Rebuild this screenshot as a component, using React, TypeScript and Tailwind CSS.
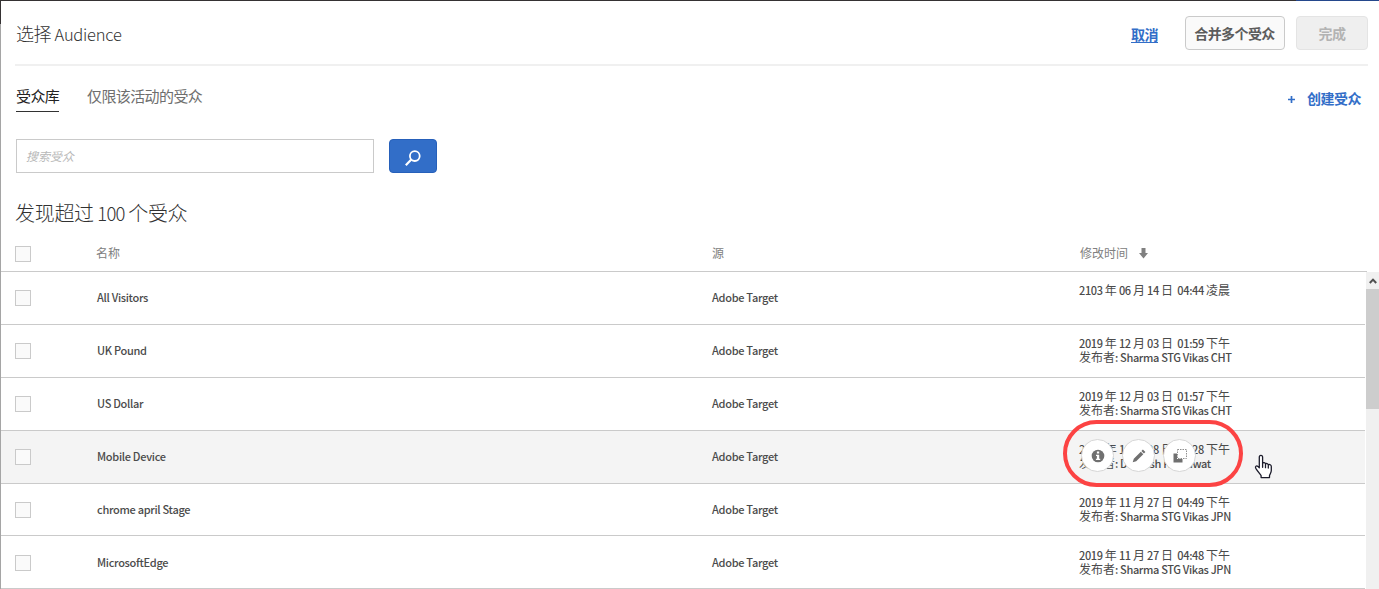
import React from 'react';

type Row = {
  name: string;
  date: string;
  by?: string;
  height: string;
  pad: string;
  active?: boolean;
};

const rows: Row[] = [
  { name: 'All Visitors', date: '2103 年 06 月 14 日\u00a0 04:44 凌晨', height: 'h-[53px]', pad: 'pt-[17px]' },
  { name: 'UK Pound', date: '2019 年 12 月 03 日\u00a0 01:59 下午', by: 'Sharma STG Vikas CHT', height: 'h-[53px]', pad: 'pt-[17px]' },
  { name: 'US Dollar', date: '2019 年 12 月 03 日\u00a0 01:57 下午', by: 'Sharma STG Vikas CHT', height: 'h-[53px]', pad: 'pt-[17px]' },
  { name: 'Mobile Device', date: '2019 年 11 月 28 日\u00a0 04:28 下午', by: 'Durgesh Kumawat', height: 'h-[53px]', pad: 'pt-[17px]', active: true },
  { name: 'chrome april Stage', date: '2019 年 11 月 27 日\u00a0 04:49 下午', by: 'Sharma STG Vikas JPN', height: 'h-[52px]', pad: 'pt-[17px]' },
  { name: 'MicrosoftEdge', date: '2019 年 11 月 27 日\u00a0 04:48 下午', by: 'Sharma STG Vikas JPN', height: 'h-[53px]', pad: 'pt-[18px]' },
];

/* Chinese characters are set larger and lighter than the Latin text beside them. */
function Mixed({ text }: { text: string }) {
  return (
    <>
      {text.split(/([\u4e00-\u9fff]+)/).map((part, i) =>
        i % 2 ? <span key={i} className="text-[12px] leading-[14px] font-normal tracking-normal">{part}</span> : part,
      )}
    </>
  );
}

function Checkbox() {
  return <span className="block size-4 shrink-0 border border-[#cacaca] bg-[#fafafa]" />;
}

function ActionButton({ label, children }: { label: string; children: React.ReactNode }) {
  return (
    <button aria-label={label} className="flex size-[33px] items-center justify-center rounded-full border border-[#d6d6d6] bg-white">
      {children}
    </button>
  );
}

function RowActions() {
  return (
    <div className="absolute left-[1062px] top-[-11px] flex h-[67px] w-[180px] items-center gap-[8px] rounded-full border-4 border-[#fc4343] pl-[14px] pt-[4px]">
      <ActionButton label="info">
        <svg width="14" height="14" viewBox="0 0 14 14">
          <circle cx="7" cy="7" r="6.3" fill="#707070" />
          <path d="M5.9 2.6h2.3v2H5.900zM5 5.700h3.200v4h1v1.300H4.900V9.700h1V7H5z" fill="#fff" />
        </svg>
      </ActionButton>
      <ActionButton label="edit">
        <svg width="14" height="14" viewBox="0 0 14 14" fill="#707070">
          <path d="M10.900.6 13.400 3.100 11.900 4.600 9.400 2.100zM8.800 2.700 11.300 5.200 4.200 12.200.7 13.300 1.800 9.700z" />
        </svg>
      </ActionButton>
      <ActionButton label="copy">
        <svg width="14" height="14" viewBox="0 0 14 14">
          <path d="M.5 4.500h3.500v5.500h5.500v3.500h-9z" fill="#707070" />
          <rect x="4.500" y=".5" width="9" height="9" fill="none" stroke="#909090" strokeDasharray="1.500 1" />
        </svg>
      </ActionButton>
    </div>
  );
}

function Pointer() {
  return (
    <svg className="absolute left-[1253px] top-[23px]" width="19" height="25" viewBox="0 0 19 25">
      <path
        d="M5.300 3.300c0-2.600 3.300-2.600 3.300 0v6c.6-1 2.600-.8 2.900.6.8-.8 2.600-.4 2.800.9 1.300-.7 3 .1 3 1.700v4.100c0 2-1.200 3.100-1.800 5v2H7.100v-2c-1.600-2.200-3.600-4.600-5.300-7.300-1.100-2 .8-3.100 2.100-1.900l1.400 1.400zM8.600 9.300v4M11.500 10.500v3.200M14.300 11.500v2.500"
        fill="#fff" stroke="#1c1c2b" strokeWidth="1.300" strokeLinejoin="round" strokeLinecap="round"
      />
    </svg>
  );
}

export default function App() {
  return (
    <div className="flex h-[589px] w-[1379px] flex-col overflow-hidden bg-white font-['Noto_Sans_CJK_SC',sans-serif] text-[#4b4b4b]">
      <div className="flex h-px shrink-0 bg-[#353233]">
        <span className="ml-[1296px] w-[83px] bg-[#24478c]" />
      </div>
      <div className="flex min-h-0 grow">
        <div className="w-px shrink-0 bg-[#a5a5a5]">
          <div className="h-[23px] bg-[#353233]" />
        </div>
        <main className="flex min-w-0 grow flex-col">
          <header className="ml-[14px] mr-[11px] flex h-[65px] shrink-0 items-center border-b-2 border-[#f0f0f0]">
            <h1 className="grow whitespace-nowrap pl-px pt-[2px] text-[18px] leading-6 font-light tracking-[-0.4px] text-[#323232]">
              选择<span className="text-[16.5px] tracking-[-0.25px]"> Audience</span>
            </h1>
            <a className="mr-[27px] pt-[2px] text-[14px] leading-5 font-bold tracking-[-0.5px] text-[#326ec8] underline underline-offset-2">取消</a>
            <button className="mr-[11px] h-[34px] w-[100px] rounded-[4px] border border-[#cacaca] bg-[#fafafa] pr-px pt-px text-[14px] font-bold tracking-[-0.6px] text-[#5c5c5c]">合并多个受众</button>
            <button className="h-[34px] w-[72px] rounded-[4px] border border-[#e4e4e4] bg-[#efefef] pt-px text-[14px] font-bold tracking-[-0.6px] text-[#b3b3b3]">完成</button>
          </header>

          <nav className="ml-[15px] mr-[18px] flex h-[46px] shrink-0 items-end text-[15px] leading-[22px] tracking-[-0.6px]">
            <a className="mr-[28px] h-[27px] w-[43px] whitespace-nowrap border-b border-[#323232] text-[#222]">受众库</a>
            <a className="h-[27px] grow text-[#6e6e6e]">仅限该活动的受众</a>
            <a className="flex h-[25px] items-center gap-[12px] text-[14px] leading-5 font-bold tracking-[-0.5px] text-[#326ec8]">
              <svg width="7" height="7" viewBox="0 0 7 7"><path d="M3.500 0v7M0 3.500h7" stroke="#326ec8" strokeWidth="1.700" /></svg>
              <span className="pb-[3px]">创建受众</span>
            </a>
          </nav>

          <div className="ml-[15px] mt-[27px] flex h-[34px] shrink-0">
            <div className="flex w-[358px] items-center border border-[#cacaca] pb-px pl-[9px] text-[12px] italic text-[#b8b8b8]">搜索受众</div>
            <button aria-label="search" className="ml-[15px] flex w-[48px] items-center justify-center rounded-[4px] border border-[#2660ba] bg-[#326ec8] pt-[4px]">
              <svg width="16" height="16" viewBox="0 0 16 16" fill="none" stroke="#fff" strokeWidth="1.800">
                <circle cx="9.800" cy="6.100" r="4.900" />
                <path d="M6.300 9.600.8 15.200" strokeWidth="2.200" />
              </svg>
            </button>
          </div>

          <h2 className="ml-[14px] mt-[25px] h-[30px] shrink-0 text-[20px] leading-[30px] font-light tracking-[-0.3px] text-[#323232]">
            发现超过<span className="text-[18.500px] tracking-[-0.7px]"> 100 </span>个受众
          </h2>

          <div className="flex h-[44px] w-[1366px] shrink-0 items-center border-b border-[#cacaca] pl-[14px] pt-[8px] text-[12px] leading-4 text-[#808080]">
            <Checkbox />
            <span className="ml-[65px] w-[616px] pb-px">名称</span>
            <span className="w-[368px] pb-px">源</span>
            <span className="pb-px">修改时间</span>
            <svg className="ml-[11px]" width="9" height="11" viewBox="0 0 9 11"><path d="M2.500 0h4v5H9L4.500 10.500 0 5h2.500z" fill="#808080" /></svg>
          </div>

          <div className="flex min-h-0 grow">
            <div className="mr-px w-[1364px] shrink-0 text-[11px]">
              {rows.map((row) => (
                <div key={row.name} className={`relative flex border-b border-[#cacaca] pl-[14px] font-medium ${row.height} ${row.pad} ${row.active ? 'bg-[#f4f4f4]' : ''}`}>
                  <div className="pt-px"><Checkbox /></div>
                  <span className="ml-[66px] w-[615px] leading-4 tracking-[-0.3px]">{row.name}</span>
                  <span className="w-[367px] leading-4 tracking-[-0.3px]">Adobe Target</span>
                  <div className="-mt-[6px] whitespace-nowrap leading-[14px] tracking-[-0.35px]">
                    <div className="h-[14px]"><Mixed text={row.date} /></div>
                    {row.by && <div className="h-[14px]"><Mixed text={`发布者: ${row.by}`} /></div>}
                  </div>
                  {row.active && <RowActions />}
                  {row.active && <Pointer />}
                </div>
              ))}
            </div>
            <div className="flex grow flex-col bg-[#f0f0f0]">
              <div className="flex h-[17px] items-center justify-center pl-px">
                <svg width="8" height="6" viewBox="0 0 8 6"><path d="M.8 5 4 1.600 7.200 5" fill="none" stroke="#505050" strokeWidth="2" /></svg>
              </div>
              <div className="h-[120px] bg-[#cdcdcd]" />
            </div>
          </div>
        </main>
      </div>
    </div>
  );
}
